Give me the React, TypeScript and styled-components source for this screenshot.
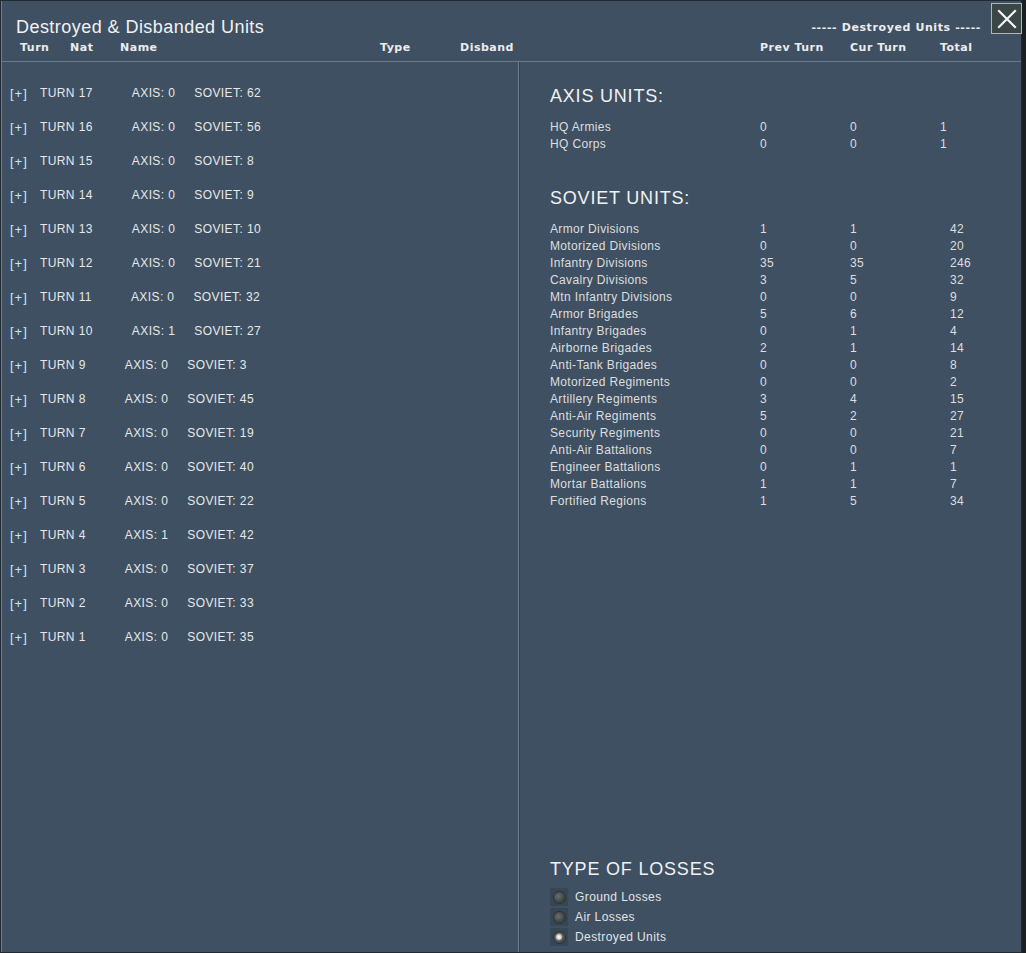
import React from "react";
import styled, { createGlobalStyle } from "styled-components";

const GlobalStyle = createGlobalStyle`
  html, body { margin: 0; padding: 0; background: #1c1f22; }
  body { font-family: "Liberation Sans", Arial, sans-serif; }
  * { box-sizing: border-box; }
`;

const Window = styled.div`
  width: 1022px;
  height: 953px;
  display: flex;
  flex-direction: column;
  background: #3e5062;
  border: 1px solid #222a31;
  box-shadow: inset 1px 0 0 #6f7e8b;
  color: #e6e6e6;
`;

const Header = styled.div`
  height: 60px;
  display: flex;
  flex-direction: column;
`;

const TitleRow = styled.div`
  height: 40px;
  display: flex;
  align-items: flex-start;
  padding-left: 15px;
`;

const Title = styled.div`
  margin-top: 16px;
  font-size: 18px;
  line-height: 20px;
  letter-spacing: 0.45px;
  color: #f2f2f2;
`;

const Spacer = styled.div`
  flex: 1;
`;

const BoldLabel = styled.span`
  font-family: "DejaVu Sans", Verdana, sans-serif;
  font-weight: bold;
  font-size: 11px;
  letter-spacing: 0.5px;
  line-height: 14px;
  color: #ececec;
  white-space: nowrap;
`;

const DestroyedLabel = styled(BoldLabel)`
  margin-top: 20px;
  margin-right: 10px;
  letter-spacing: 0.6px;
`;

const CloseButton = styled.button`
  margin-top: 2px;
  margin-right: -1px;
  width: 31px;
  height: 31px;
  padding: 0;
  display: flex;
  align-items: center;
  justify-content: center;
  background: #3a4746;
  border: 1px solid #aeb6b8;
  cursor: pointer;
`;

const ColumnRow = styled.div`
  display: flex;
  padding-left: 19px;
  height: 20px;
`;

const Col = styled(BoldLabel)<{ $w?: number }>`
  display: inline-block;
  width: ${(p) => (p.$w ? `${p.$w}px` : "auto")};
`;

const Body = styled.div`
  flex: 1;
  display: flex;
  border-top: 1px solid #6a7a88;
  min-height: 0;
`;

const LeftPanel = styled.div`
  width: 518px;
  border-right: 1px solid #6c7b89;
  padding: 14px 0 0 9px;
  display: flex;
  flex-direction: column;
`;

const TurnRow = styled.div`
  height: 34px;
  display: flex;
  align-items: center;
  font-size: 12px;
  letter-spacing: 0.4px;
  color: #e8e8e8;
  white-space: nowrap;
`;

const Expand = styled.span`
  width: 30px;
  color: #c9e6f2;
  font-size: 13px;
  letter-spacing: 1px;
`;

const AxisCount = styled.span`
  margin-left: 39px;
`;

const SovietCount = styled.span`
  margin-left: 19px;
`;

const RightPanel = styled.div`
  flex: 1;
  border-left: 1px solid #34434f;
  padding: 22px 0 5px 30px;
  display: flex;
  flex-direction: column;
`;

const SectionTitle = styled.div<{ $gap?: number }>`
  margin-top: ${(p) => p.$gap ?? 0}px;
  font-size: 18px;
  line-height: 24px;
  letter-spacing: 0.8px;
  color: #f2f2f2;
`;

const Table = styled.div`
  margin-top: 10px;
  display: flex;
  flex-direction: column;
`;

const TableRow = styled.div<{ $totalAt: number }>`
  display: grid;
  grid-template-columns: 210px 90px ${(p) => p.$totalAt}px 1fr;
  height: 17px;
  align-items: center;
  font-size: 12px;
  letter-spacing: 0.35px;
  color: #dedede;
  white-space: nowrap;
`;

const LossesBlock = styled.div`
  margin-top: auto;
  display: flex;
  flex-direction: column;
`;

const RadioList = styled.div`
  margin-top: 6px;
  display: flex;
  flex-direction: column;
`;

const RadioRow = styled.label`
  height: 20px;
  display: flex;
  align-items: center;
  font-size: 12px;
  letter-spacing: 0.4px;
  color: #e4e4e4;
`;

const RadioBox = styled.span`
  width: 18px;
  height: 18px;
  margin-right: 7px;
  display: flex;
  align-items: center;
  justify-content: center;
  background: rgba(40, 52, 60, 0.35);
`;

const RadioDot = styled.span<{ $on: boolean }>`
  width: 11px;
  height: 11px;
  border-radius: 50%;
  background: ${(p) =>
    p.$on
      ? "radial-gradient(circle at 45% 45%, #ffffff 0, #d8d8d8 25%, #5a5a5a 45%, #2a2e2e 100%)"
      : "radial-gradient(circle at 40% 40%, #6a706e 0, #414846 55%, #2a302f 100%)"};
  box-shadow: 0 0 0 1px #2b3331;
`;

const turns: [number, number, number][] = [
  [17, 0, 62],
  [16, 0, 56],
  [15, 0, 8],
  [14, 0, 9],
  [13, 0, 10],
  [12, 0, 21],
  [11, 0, 32],
  [10, 1, 27],
  [9, 0, 3],
  [8, 0, 45],
  [7, 0, 19],
  [6, 0, 40],
  [5, 0, 22],
  [4, 1, 42],
  [3, 0, 37],
  [2, 0, 33],
  [1, 0, 35],
];

const axisUnits: [string, number, number, number][] = [
  ["HQ Armies", 0, 0, 1],
  ["HQ Corps", 0, 0, 1],
];

const sovietUnits: [string, number, number, number][] = [
  ["Armor Divisions", 1, 1, 42],
  ["Motorized Divisions", 0, 0, 20],
  ["Infantry Divisions", 35, 35, 246],
  ["Cavalry Divisions", 3, 5, 32],
  ["Mtn Infantry Divisions", 0, 0, 9],
  ["Armor Brigades", 5, 6, 12],
  ["Infantry Brigades", 0, 1, 4],
  ["Airborne Brigades", 2, 1, 14],
  ["Anti-Tank Brigades", 0, 0, 8],
  ["Motorized Regiments", 0, 0, 2],
  ["Artillery Regiments", 3, 4, 15],
  ["Anti-Air Regiments", 5, 2, 27],
  ["Security Regiments", 0, 0, 21],
  ["Anti-Air Battalions", 0, 0, 7],
  ["Engineer Battalions", 0, 1, 1],
  ["Mortar Battalions", 1, 1, 7],
  ["Fortified Regions", 1, 5, 34],
];

const UnitTable: React.FC<{ rows: [string, number, number, number][]; totalAt: number }> = ({
  rows,
  totalAt,
}) => (
  <Table>
    {rows.map(([name, prev, cur, total]) => (
      <TableRow key={name} $totalAt={totalAt}>
        <span>{name}</span>
        <span>{prev}</span>
        <span>{cur}</span>
        <span>{total}</span>
      </TableRow>
    ))}
  </Table>
);

export default function App() {
  const losses = ["Ground Losses", "Air Losses", "Destroyed Units"];
  return (
    <>
      <GlobalStyle />
      <Window>
        <Header>
          <TitleRow>
            <Title>Destroyed &amp; Disbanded Units</Title>
            <Spacer />
            <DestroyedLabel>----- Destroyed Units -----</DestroyedLabel>
            <CloseButton aria-label="Close">
              <svg width="22" height="22" viewBox="0 0 22 22">
                <path d="M3 3 L19 19 M19 3 L3 19" stroke="#f4f4f4" strokeWidth="2.2" strokeLinecap="square" />
              </svg>
            </CloseButton>
          </TitleRow>
          <ColumnRow>
            <Col $w={50}>Turn</Col>
            <Col $w={50}>Nat</Col>
            <Col $w={260}>Name</Col>
            <Col $w={80}>Type</Col>
            <Col $w={300}>Disband</Col>
            <Col $w={90}>Prev Turn</Col>
            <Col $w={90}>Cur Turn</Col>
            <Col>Total</Col>
          </ColumnRow>
        </Header>
        <Body>
          <LeftPanel>
            {turns.map(([t, a, s]) => (
              <TurnRow key={t}>
                <Expand>[+]</Expand>
                <span>TURN {t}</span>
                <AxisCount>AXIS: {a}</AxisCount>
                <SovietCount>SOVIET: {s}</SovietCount>
              </TurnRow>
            ))}
          </LeftPanel>
          <RightPanel>
            <SectionTitle>AXIS UNITS:</SectionTitle>
            <UnitTable rows={axisUnits} totalAt={90} />
            <SectionTitle $gap={34}>SOVIET UNITS:</SectionTitle>
            <UnitTable rows={sovietUnits} totalAt={100} />
            <LossesBlock>
              <SectionTitle>TYPE OF LOSSES</SectionTitle>
              <RadioList>
                {losses.map((l, i) => (
                  <RadioRow key={l}>
                    <RadioBox>
                      <RadioDot $on={i === 2} />
                    </RadioBox>
                    {l}
                  </RadioRow>
                ))}
              </RadioList>
            </LossesBlock>
          </RightPanel>
        </Body>
      </Window>
    </>
  );
}
